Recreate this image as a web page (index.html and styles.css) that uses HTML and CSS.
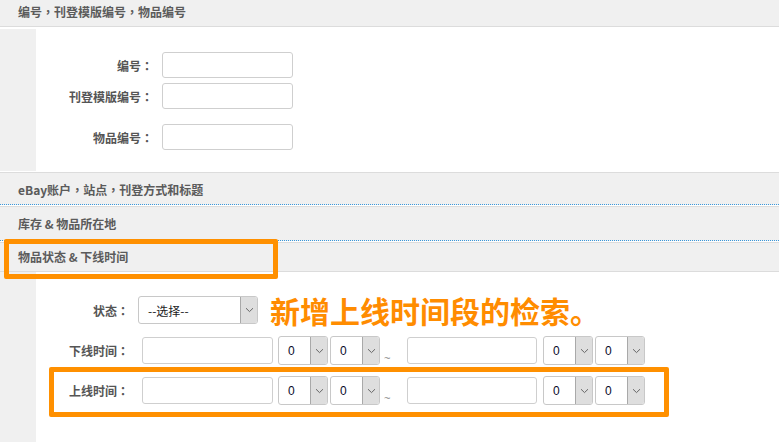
FILE: index.html
```html
<!DOCTYPE html>
<html lang="zh-CN">
<head>
<meta charset="utf-8">
<title>搜索</title>
<link rel="stylesheet" href="styles.css">
</head>
<body>
<div class="page">
  <div class="head head-cut">编号<span class="p" lang="zh-TW">，</span>刊登模版编号<span class="p" lang="zh-TW">，</span>物品编号</div>
  <div class="body body-1">
    <div class="strip"></div>
    <div class="form form-1">
      <div class="row r1"><span class="lbl">编号<span class="p" lang="zh-TW">：</span></span><span class="inp"></span></div>
      <div class="row r2"><span class="lbl">刊登模版编号<span class="p" lang="zh-TW">：</span></span><span class="inp"></span></div>
      <div class="row r3"><span class="lbl">物品编号<span class="p" lang="zh-TW">：</span></span><span class="inp"></span></div>
    </div>
  </div>
  <div class="head head-fold h2">eBay账户<span class="p" lang="zh-TW">，</span>站点<span class="p" lang="zh-TW">，</span>刊登方式和标题</div>
  <div class="head head-fold h3">库存 &amp; 物品所在地</div>
  <div class="head head-open h4">物品状态 &amp; 下线时间</div>
  <div class="body body-4">
    <div class="strip"></div>
    <div class="form form-4">
      <div class="row s1">
        <span class="lbl lbl-4">状态<span class="p" lang="zh-TW">：</span></span>
        <span class="sel sel-status"><span class="val">--选择--</span><span class="btn"><svg width="9" height="6" viewBox="0 0 9 6"><path d="M1 1.2 L4.5 4.6 L8 1.2" fill="none" stroke="#666" stroke-width="1"/></svg></span></span>
        <span class="note">新增上线时间段的检索。</span>
      </div>
      <div class="row s2">
        <span class="lbl lbl-4">下线时间<span class="p" lang="zh-TW">：</span></span>
        <span class="inp inp-date"></span>
        <span class="sel tsel t1"><span class="val">0</span><span class="btn"><svg width="9" height="6" viewBox="0 0 9 6"><path d="M1 1.2 L4.5 4.6 L8 1.2" fill="none" stroke="#666" stroke-width="1"/></svg></span></span>
        <span class="sel tsel t2"><span class="val">0</span><span class="btn"><svg width="9" height="6" viewBox="0 0 9 6"><path d="M1 1.2 L4.5 4.6 L8 1.2" fill="none" stroke="#666" stroke-width="1"/></svg></span></span>
        <span class="tilde">~</span>
        <span class="inp inp-date2"></span>
        <span class="sel tsel t3"><span class="val">0</span><span class="btn"><svg width="9" height="6" viewBox="0 0 9 6"><path d="M1 1.2 L4.5 4.6 L8 1.2" fill="none" stroke="#666" stroke-width="1"/></svg></span></span>
        <span class="sel tsel t2"><span class="val">0</span><span class="btn"><svg width="9" height="6" viewBox="0 0 9 6"><path d="M1 1.2 L4.5 4.6 L8 1.2" fill="none" stroke="#666" stroke-width="1"/></svg></span></span>
      </div>
      <div class="row s3">
        <span class="lbl lbl-4">上线时间<span class="p" lang="zh-TW">：</span></span>
        <span class="inp inp-date"></span>
        <span class="sel tsel t1"><span class="val">0</span><span class="btn"><svg width="9" height="6" viewBox="0 0 9 6"><path d="M1 1.2 L4.5 4.6 L8 1.2" fill="none" stroke="#666" stroke-width="1"/></svg></span></span>
        <span class="sel tsel t2"><span class="val">0</span><span class="btn"><svg width="9" height="6" viewBox="0 0 9 6"><path d="M1 1.2 L4.5 4.6 L8 1.2" fill="none" stroke="#666" stroke-width="1"/></svg></span></span>
        <span class="tilde">~</span>
        <span class="inp inp-date2"></span>
        <span class="sel tsel t3"><span class="val">0</span><span class="btn"><svg width="9" height="6" viewBox="0 0 9 6"><path d="M1 1.2 L4.5 4.6 L8 1.2" fill="none" stroke="#666" stroke-width="1"/></svg></span></span>
        <span class="sel tsel t2"><span class="val">0</span><span class="btn"><svg width="9" height="6" viewBox="0 0 9 6"><path d="M1 1.2 L4.5 4.6 L8 1.2" fill="none" stroke="#666" stroke-width="1"/></svg></span></span>
      </div>
    </div>
  </div>
  <div class="mark mark-1"></div>
  <div class="mark mark-2"></div>
</div>
</body>
</html>
```

FILE: styles.css
```css
html, body {
  margin: 0;
  padding: 0;
  background: #fff;
}
body {
  font-family: "Liberation Sans", "Noto Sans CJK SC", sans-serif;
  font-size: 12px;
  color: #555;
  overflow: hidden;
}
.page {
  position: relative;
  width: 779px;
  height: 442px;
  overflow: hidden;
}
.p {
  font-family: "Noto Sans CJK TC", "Noto Sans CJK SC", sans-serif;
}
.head {
  background: #f0f0f0;
  padding-left: 18px;
  font-weight: bold;
  font-size: 12px;
  color: #5b5b5b;
  font-family: "Noto Sans CJK SC", sans-serif;
  white-space: nowrap;
}
.head-cut {
  height: 26px;
  line-height: 24px;
  border-bottom: 1px solid #dcdcdc;
}
.h2 {
  border-top: 1px solid #dcdcdc;
  border-bottom: 1px dotted #3a98dc;
  height: 31px;
  line-height: 34px;
}
.h3 {
  margin-top: 1px;
  border-top: 1px solid #dcdcdc;
  border-bottom: 1px dotted #3a98dc;
  height: 33px;
  line-height: 33px;
}
.h4 {
  margin-top: 1px;
  border-top: 1px solid #dcdcdc;
  border-bottom: 1px solid #dcdcdc;
  height: 28px;
  line-height: 27px;
}
.body {
  display: flex;
}
.body-1 {
  margin: 2px 0 1px;
  height: 142px;
}
.body-4 {
  height: 170px;
}
.strip {
  width: 36px;
  flex: none;
  background: #f0f0f0;
}
.form {
  flex: 1;
  display: flex;
  flex-direction: column;
}
.form-1 {
  padding-top: 23px;
}
.form-4 {
  padding-top: 24px;
}
.row {
  display: flex;
  align-items: center;
}
.r1, .r2, .r3 {
  height: 26px;
}
.r2 { margin-top: 5px; }
.r3 { margin-top: 15px; }
.lbl {
  width: 117px;
  margin-right: 9px;
  text-align: right;
  font-weight: bold;
  color: #555;
  font-family: "Noto Sans CJK SC", sans-serif;
  white-space: nowrap;
}
.lbl-4 {
  width: 93px;
  margin-right: 0;
}
.inp {
  display: block;
  box-sizing: border-box;
  width: 131px;
  height: 26px;
  border: 1px solid #cfcfcf;
  border-radius: 3px;
  background: #fff;
}
.s1 { height: 28px; }
.s2 { height: 29px; margin-top: 12px; }
.s3 { height: 29px; margin-top: 11px; }
.inp-date {
  margin-left: 13px;
  width: 131px;
  height: 27px;
}
.inp-date2 {
  width: 130px;
  height: 27px;
}
.sel {
  box-sizing: border-box;
  display: flex;
  align-items: stretch;
  border: 1px solid #c8c8c8;
  border-radius: 3px;
  background: #fff;
  overflow: hidden;
  color: #111;
}
.sel .val {
  flex: 1;
  display: flex;
  align-items: center;
  white-space: nowrap;
}
.sel .btn {
  flex: none;
  display: flex;
  align-items: center;
  justify-content: center;
  background: #dedede;
  border-left: 1px solid #a9a9a9;
}
.sel-status {
  margin-left: 9px;
  width: 120px;
  height: 28px;
  font-family: "Noto Sans CJK SC", sans-serif;
}
.sel-status .val {
  padding-left: 9px;
  font-size: 12px;
  color: #222;
}
.sel-status .btn {
  width: 16px;
}
.tsel {
  width: 50px;
  height: 29px;
}
.tsel .val {
  padding-left: 9px;
  font-size: 12px;
  color: #0a0a2a;
}
.tsel .btn {
  width: 16px;
}
.t1 { margin-left: 5px; }
.t2 { margin-left: 2px; }
.t3 { margin-left: 6px; }
.tilde {
  align-self: flex-end;
  width: 27px;
  box-sizing: border-box;
  padding-left: 4px;
  padding-bottom: 1px;
  font-size: 11px;
  line-height: 12px;
  color: #888;
}
.note {
  margin-left: 12px;
  font-family: "Noto Sans CJK SC", sans-serif;
  font-weight: bold;
  font-size: 30px;
  line-height: 30px;
  color: #ff8c00;
  white-space: nowrap;
}
.mark {
  position: absolute;
  box-sizing: border-box;
  border: 5px solid #ff9000;
  border-radius: 2px;
}
.mark-1 {
  left: 4px;
  top: 239px;
  width: 274px;
  height: 40px;
}
.mark-2 {
  left: 49px;
  top: 367px;
  width: 620px;
  height: 50px;
}
```
